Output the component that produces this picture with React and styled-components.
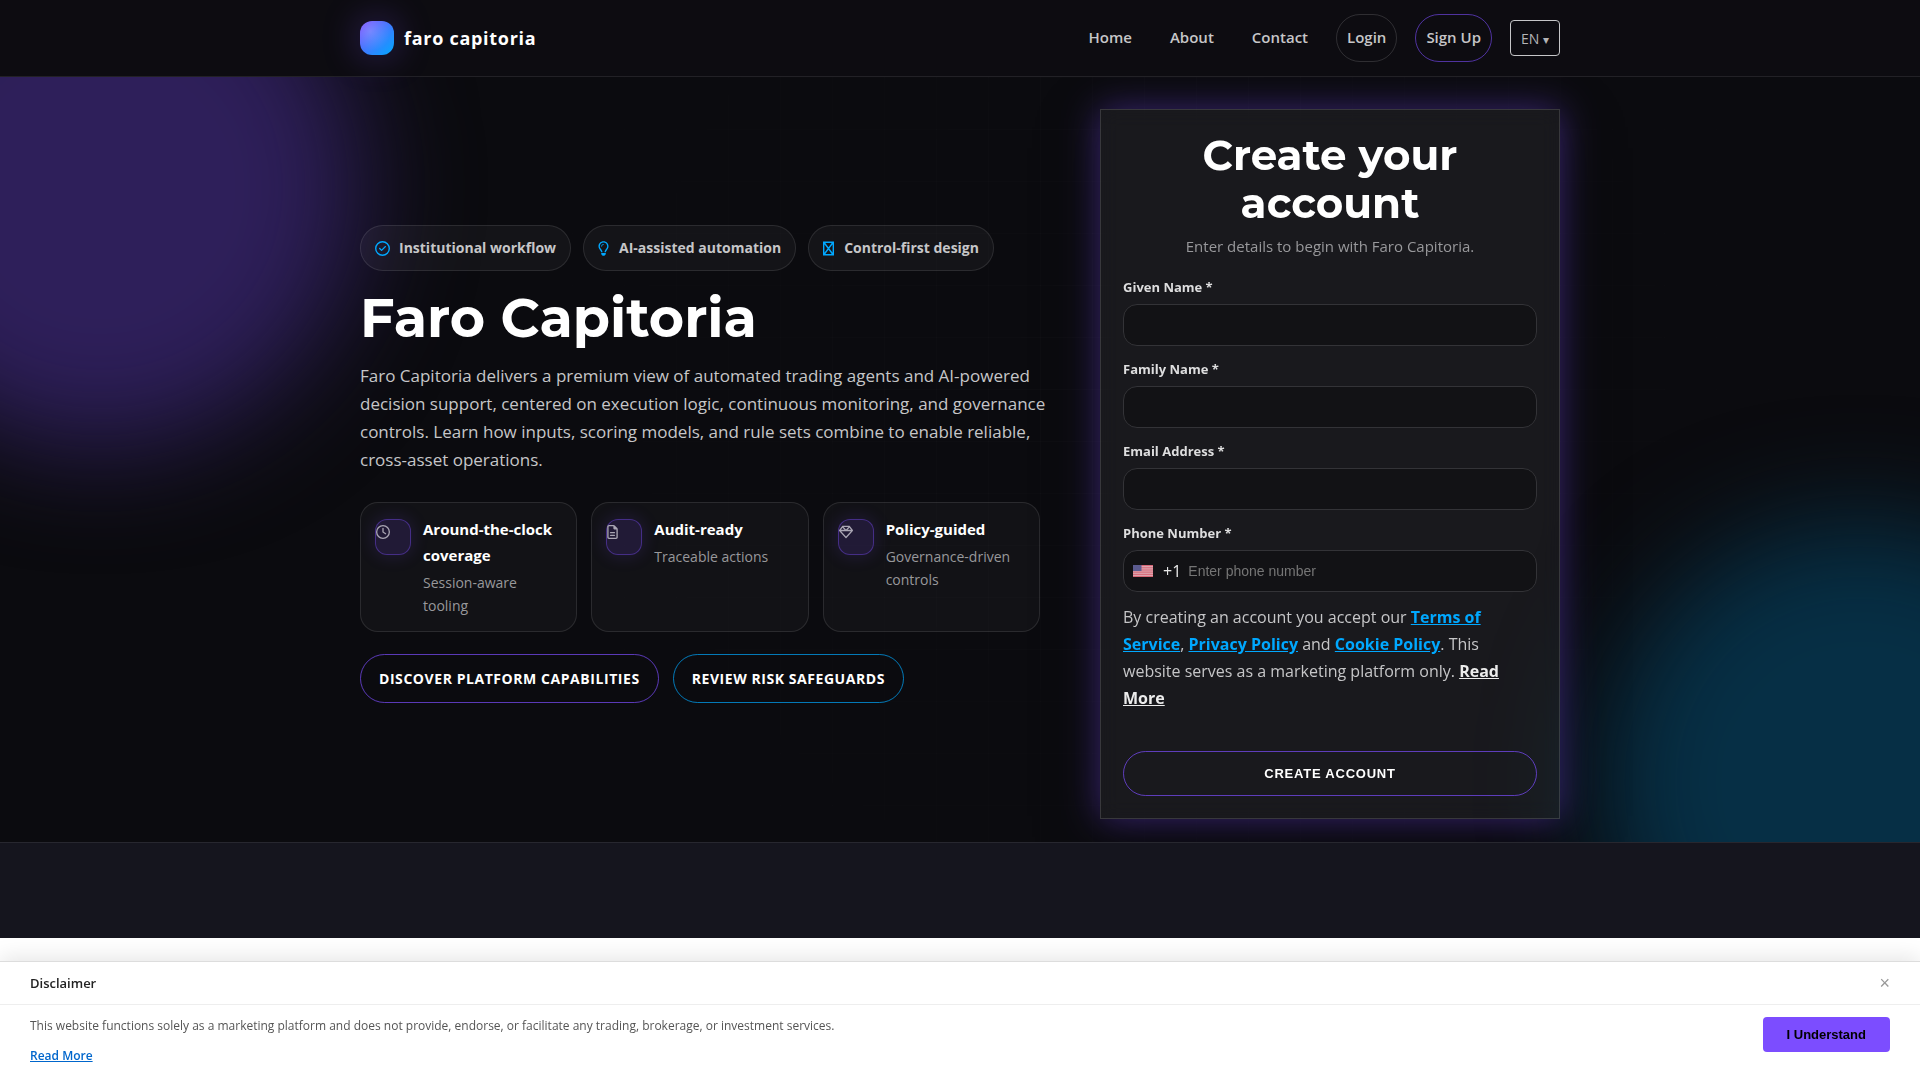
import React from "react";
import styled, { createGlobalStyle, ThemeProvider } from "styled-components";
import {
  FaRegCircleCheck,
  FaRegClock,
  FaRegFileLines,
  FaRegGem,
  FaRegLightbulb,
} from "react-icons/fa6";

const theme = {
  colors: {
    background: "#0b0b0f",
    header: "#0d0c11",
    section: "#15151e",
    primary: "#7c4dff",
    secondary: "#00a8ff",
    white: "#ffffff",
    text: "#c6c6c8",
    muted: "#98989b",
    line: "rgba(255, 255, 255, 0.1)",
  },
  fonts: {
    body: '"Open Sans", "Noto Sans", sans-serif',
    heading: 'Montserrat, "Open Sans", sans-serif',
    control: '"Liberation Sans", Arial, sans-serif',
  },
};

const GlobalStyle = createGlobalStyle`
  *,
  *::before,
  *::after {
    box-sizing: border-box;
  }

  body {
    margin: 0;
    background: #ffffff;
    font-family: ${theme.fonts.body};
    font-size: 16px;
    line-height: 27px;
    color: ${theme.colors.text};
    overflow-x: hidden;
  }

  h1,
  h2,
  h3,
  p {
    margin: 0;
  }
`;

const Container = styled.div`
  width: 100%;
  max-width: 1240px;
  margin: 0 auto;
  padding: 0 20px;
`;

/* Header */

const Header = styled.header`
  position: relative;
  z-index: 2;
  background-color: ${({ theme }) => theme.colors.header};
  border-bottom: 1px solid rgba(255, 255, 255, 0.09);
`;

const HeaderRow = styled(Container)`
  display: flex;
  justify-content: space-between;
  align-items: center;
  padding-top: 14px;
  padding-bottom: 14px;
`;

const Brand = styled.a`
  display: flex;
  align-items: center;
  gap: 10px;
  font-size: 18px;
  font-weight: 700;
  letter-spacing: 0.04em;
  color: ${({ theme }) => theme.colors.white};
  text-decoration: none;
`;

const BrandMark = styled.span`
  width: 34px;
  height: 34px;
  border-radius: 12px;
  background: radial-gradient(
      circle at 30% 30%,
      rgba(255, 255, 255, 0.2),
      transparent 60%
    ),
    linear-gradient(135deg, #7c4dff, #00a8ff);
  box-shadow: 0 0 36px rgba(124, 77, 255, 0.35);
`;

const Nav = styled.nav`
  display: flex;
  align-items: center;
  gap: 18px;
`;

const navBorders = {
  soft: "1px solid rgba(255, 255, 255, 0.14)",
  accent: "1px solid rgba(124, 77, 255, 0.6)",
};

const NavLink = styled.a`
  padding: 10px 10px 12px;
  border: ${({ $outline }) => navBorders[$outline] || 0};
  border-radius: 24px;
  font-size: 15px;
  font-weight: 600;
  line-height: 24px;
  color: ${({ theme }) => theme.colors.text};
  text-decoration: none;
`;

const LanguageButton = styled.button`
  height: 36px;
  padding: 0 10px;
  border: 1px solid ${({ theme }) => theme.colors.text};
  border-radius: 4px;
  background: transparent;
  font-family: ${({ theme }) => theme.fonts.body};
  font-size: 14px;
  color: #b4b4b6;
  cursor: pointer;

  span {
    font-size: 12px;
  }
`;

/* Hero */

const Hero = styled.section`
  position: relative;
  overflow: hidden;
  padding: 32px 0 23px;
  background-color: ${({ theme }) => theme.colors.background};

  &::before {
    content: "";
    position: absolute;
    inset: 0;
    background-image: linear-gradient(
        to right,
        rgba(255, 255, 255, 0.03) 1px,
        transparent 1px
      ),
      linear-gradient(to bottom, rgba(255, 255, 255, 0.03) 1px, transparent 1px);
    background-size: 52px 52px;
    mask-image: radial-gradient(circle at 60% 40%, #000000, transparent 60%);
    opacity: 0.5;
  }
`;

const Glow = styled.div`
  position: absolute;
  width: 520px;
  height: 520px;
  border-radius: 50%;
  filter: blur(55px);
`;

const PurpleGlow = styled(Glow)`
  top: -150px;
  left: -160px;
  background: #2e1f5a;
`;

const BlueGlow = styled(Glow)`
  right: -200px;
  bottom: -200px;
  background: #062f45;
`;

const HeroGrid = styled(Container)`
  position: relative;
  display: grid;
  grid-template-columns: minmax(0, 1fr) 460px;
  align-items: center;
  gap: 60px;

  @media screen and (max-width: 1100px) {
    grid-template-columns: minmax(0, 1fr);
  }
`;

const Chips = styled.div`
  display: flex;
  flex-wrap: wrap;
  gap: 12px;
`;

const Chip = styled.span`
  display: flex;
  align-items: center;
  gap: ${({ $narrow }) => ($narrow ? 10 : 9)}px;
  padding: 10px 14px;
  border: 1px solid ${({ theme }) => theme.colors.line};
  border-radius: 24px;
  background-color: rgba(255, 255, 255, 0.04);
  font-size: 14px;
  font-weight: 700;
  line-height: 24px;

  svg {
    width: ${({ $narrow }) => ($narrow ? 11 : 15)}px;
    height: 15px;
    color: ${({ theme }) => theme.colors.secondary};
  }
`;

const Title = styled.h1`
  margin-top: 19px;
  font-family: ${({ theme }) => theme.fonts.heading};
  font-size: 54px;
  font-weight: 700;
  line-height: 57px;
  color: ${({ theme }) => theme.colors.white};
`;

const Lead = styled.p`
  margin-top: 15px;
  margin-right: -10px;
  font-size: 17px;
  line-height: 28px;
`;

const Features = styled.div`
  display: grid;
  grid-template-columns: repeat(3, minmax(0, 1fr));
  gap: 14px;
  margin-top: 28px;
`;

const Feature = styled.article`
  display: flex;
  align-items: flex-start;
  gap: 12px;
  padding: 13px 14px 14px;
  border: 1px solid ${({ theme }) => theme.colors.line};
  border-radius: 18px;
  background-color: rgba(255, 255, 255, 0.03);
`;

const FeatureIcon = styled.span`
  flex: none;
  display: flex;
  align-items: flex-start;
  width: 36px;
  height: 36px;
  margin-top: 3px;
  padding-top: 5px;
  border: 1px solid rgba(124, 77, 255, 0.4);
  border-radius: 12px;
  background-color: rgba(124, 77, 255, 0.14);
  box-shadow: 0 0 18px rgba(124, 77, 255, 0.18);

  svg {
    width: ${({ $narrow }) => ($narrow ? 11 : 14)}px;
    height: 14px;
    color: #aaa6b4;
  }
`;

const FeatureTitle = styled.h3`
  font-size: 15px;
  font-weight: 700;
  line-height: 26px;
  color: ${({ theme }) => theme.colors.white};
`;

const FeatureText = styled.p`
  margin-top: 3px;
  font-size: 14px;
  line-height: 23px;
  color: ${({ theme }) => theme.colors.muted};
`;

const Actions = styled.div`
  display: flex;
  flex-wrap: wrap;
  gap: 14px;
  margin-top: 22px;
`;

const ActionLink = styled.a`
  padding: 12px 18px;
  border: 1px solid
    ${({ $accent }) =>
      $accent === "blue" ? "rgba(0, 168, 255, 0.7)" : "rgba(124, 77, 255, 0.7)"};
  border-radius: 25px;
  font-size: 14px;
  font-weight: 700;
  line-height: 23px;
  letter-spacing: 0.04em;
  text-transform: uppercase;
  text-decoration: none;
  color: ${({ theme }) => theme.colors.white};
`;

/* Sign-up form */

const FormCard = styled.form`
  padding: 21px 22px 22px;
  border: 1px solid rgba(255, 255, 255, 0.14);
  background-color: rgba(255, 255, 255, 0.06);
  box-shadow: 0 0 34px rgba(124, 77, 255, 0.42), 0 18px 60px rgba(0, 0, 0, 0.4);
  backdrop-filter: blur(10px);
`;

const FormTitle = styled.h2`
  padding: 0 60px;
  font-family: ${({ theme }) => theme.fonts.heading};
  font-size: 42px;
  font-weight: 700;
  line-height: 48px;
  text-align: center;
  color: ${({ theme }) => theme.colors.white};
`;

const FormHint = styled.p`
  margin: 6px 0 17px;
  font-size: 15px;
  line-height: 26px;
  text-align: center;
  color: ${({ theme }) => theme.colors.muted};
`;

const Field = styled.div`
  display: flex;
  flex-direction: column;
  gap: 6px;
  margin-bottom: 12px;
`;

const Label = styled.label`
  font-size: 13px;
  font-weight: 700;
  line-height: 22px;
  color: #dededf;
`;

const Input = styled.input`
  height: 42px;
  padding: 0 12px;
  border: 1px solid #333337;
  border-radius: 14px;
  background-color: #121215;
  font-family: ${({ theme }) => theme.fonts.control};
  font-size: 14px;
  color: ${({ theme }) => theme.colors.white};
`;

const PhoneBox = styled.div`
  display: flex;
  align-items: center;
  height: 42px;
  padding: 0 9px;
  border: 1px solid #333337;
  border-radius: 14px;
  background-color: #121215;
  color: #e8e8e8;

  svg {
    flex: none;
    margin-right: 10px;
  }
`;

const PhoneInput = styled.input`
  flex: 1;
  min-width: 0;
  padding: 0 7px;
  border: 0;
  background: transparent;
  font-family: ${({ theme }) => theme.fonts.control};
  font-size: 14px;
  color: ${({ theme }) => theme.colors.white};

  &::placeholder {
    color: #757575;
  }
`;

const Terms = styled.p`
  margin-bottom: 39px;
`;

const TermsLink = styled.a`
  font-weight: 700;
  color: ${({ theme, $plain }) => ($plain ? "#ececec" : theme.colors.secondary)};
`;

const SubmitButton = styled.button`
  display: block;
  width: 100%;
  height: 45px;
  border: 1px solid rgba(124, 77, 255, 0.7);
  border-radius: 23px;
  background: transparent;
  font-family: ${({ theme }) => theme.fonts.control};
  font-size: 13px;
  font-weight: 700;
  letter-spacing: 0.06em;
  text-transform: uppercase;
  color: ${({ theme }) => theme.colors.white};
  cursor: pointer;
`;

const NextSection = styled.section`
  position: relative;
  height: 96px;
  border-top: 1px solid rgba(255, 255, 255, 0.08);
  background-color: ${({ theme }) => theme.colors.section};
`;

/* Disclaimer bar */

const Disclaimer = styled.aside`
  position: fixed;
  right: 0;
  bottom: 0;
  left: 0;
  z-index: 10;
  border-top: 1px solid #dddddd;
  background-color: #ffffff;
  box-shadow: 0 -4px 20px rgba(0, 0, 0, 0.1);
`;

const DisclaimerHead = styled.div`
  display: flex;
  justify-content: space-between;
  align-items: center;
  height: 43px;
  padding: 0 30px;
  border-bottom: 1px solid #eeeeee;
`;

const DisclaimerTitle = styled.h2`
  font-size: 13px;
  font-weight: 600;
  line-height: 22px;
  color: #222222;
`;

const CloseButton = styled.button`
  padding: 0;
  border: 0;
  background: transparent;
  font-family: ${({ theme }) => theme.fonts.control};
  font-size: 18px;
  line-height: 18px;
  color: #999999;
  cursor: pointer;
`;

const DisclaimerBody = styled.div`
  display: flex;
  justify-content: space-between;
  align-items: flex-start;
  gap: 20px;
  padding: 12px 30px 15px;
  font-size: 12px;
  line-height: 18px;
  color: #555555;
`;

const ReadMore = styled.a`
  display: inline-block;
  margin-top: 12px;
  font-weight: 600;
  color: #0066cc;
`;

const ConfirmButton = styled.button`
  flex: none;
  height: 35px;
  padding: 0 24px;
  border: 0;
  border-radius: 4px;
  background-color: ${({ theme }) => theme.colors.primary};
  font-family: ${({ theme }) => theme.fonts.control};
  font-size: 13px;
  font-weight: 700;
  color: #000000;
  cursor: pointer;
`;

const CrossedBoxIcon = () => (
  <svg viewBox="0 0 11 15" fill="none" stroke="currentColor" aria-hidden="true">
    <path strokeWidth="1.4" d="M.7 1.2h9.6v12.6H.7zM1 1.5l9 12M10 1.5l-9 12" />
  </svg>
);

const UsFlag = () => (
  <svg width="20" height="12" viewBox="0 0 20 12" role="img" aria-label="United States">
    <rect width="20" height="12" fill="#d6606f" />
    <path
      d="M0 1.4h20M0 3.2h20M0 5h20M0 6.9h20M0 8.7h20M0 10.6h20"
      stroke="#dfb6bd"
      strokeWidth="0.9"
    />
    <rect width="8.5" height="6" fill="#5b5b8f" />
  </svg>
);

const chips = [
  { icon: <FaRegCircleCheck />, text: "Institutional workflow" },
  { icon: <FaRegLightbulb />, text: "AI-assisted automation", narrow: true },
  { icon: <CrossedBoxIcon />, text: "Control-first design", narrow: true },
];

const features = [
  {
    icon: <FaRegClock />,
    title: "Around-the-clock coverage",
    text: "Session-aware tooling",
  },
  {
    icon: <FaRegFileLines />,
    title: "Audit-ready",
    text: "Traceable actions",
    narrow: true,
  },
  {
    icon: <FaRegGem />,
    title: "Policy-guided",
    text: "Governance-driven controls",
  },
];

const fields = [
  { id: "given-name", label: "Given Name *", type: "text" },
  { id: "family-name", label: "Family Name *", type: "text" },
  { id: "email", label: "Email Address *", type: "email" },
];

const SiteHeader = () => (
  <Header>
    <HeaderRow>
      <Brand href="#">
        <BrandMark />
        faro capitoria
      </Brand>
      <Nav>
        <NavLink href="#">Home</NavLink>
        <NavLink href="#">About</NavLink>
        <NavLink href="#">Contact</NavLink>
        <NavLink href="#" $outline="soft">
          Login
        </NavLink>
        <NavLink href="#" $outline="accent">
          Sign Up
        </NavLink>
        <LanguageButton type="button">
          EN <span>▾</span>
        </LanguageButton>
      </Nav>
    </HeaderRow>
  </Header>
);

const HeroCopy = () => (
  <div>
    <Chips>
      {chips.map(({ icon, text, narrow }) => (
        <Chip key={text} $narrow={narrow}>
          {icon}
          {text}
        </Chip>
      ))}
    </Chips>
    <Title>Faro Capitoria</Title>
    <Lead>
      Faro Capitoria delivers a premium view of automated trading agents and
      AI-powered decision support, centered on execution logic, continuous
      monitoring, and governance controls. Learn how inputs, scoring models, and
      rule sets combine to enable reliable, cross-asset operations.
    </Lead>
    <Features>
      {features.map(({ icon, title, text, narrow }) => (
        <Feature key={title}>
          <FeatureIcon $narrow={narrow}>{icon}</FeatureIcon>
          <div>
            <FeatureTitle>{title}</FeatureTitle>
            <FeatureText>{text}</FeatureText>
          </div>
        </Feature>
      ))}
    </Features>
    <Actions>
      <ActionLink href="#">Discover platform capabilities</ActionLink>
      <ActionLink href="#" $accent="blue">
        Review risk safeguards
      </ActionLink>
    </Actions>
  </div>
);

const SignUpForm = () => (
  <FormCard onSubmit={(event) => event.preventDefault()}>
    <FormTitle>Create your account</FormTitle>
    <FormHint>Enter details to begin with Faro Capitoria.</FormHint>
    {fields.map(({ id, label, type }) => (
      <Field key={id}>
        <Label htmlFor={id}>{label}</Label>
        <Input id={id} type={type} />
      </Field>
    ))}
    <Field>
      <Label htmlFor="phone">Phone Number *</Label>
      <PhoneBox>
        <UsFlag />
        <span>+1</span>
        <PhoneInput id="phone" type="tel" placeholder="Enter phone number" />
      </PhoneBox>
    </Field>
    <Terms>
      By creating an account you accept our{" "}
      <TermsLink href="#">Terms of Service</TermsLink>,{" "}
      <TermsLink href="#">Privacy Policy</TermsLink> and{" "}
      <TermsLink href="#">Cookie Policy</TermsLink>. This website serves as a
      marketing platform only.{" "}
      <TermsLink href="#" $plain>
        Read More
      </TermsLink>
    </Terms>
    <SubmitButton type="submit">Create account</SubmitButton>
  </FormCard>
);

const DisclaimerBar = () => (
  <Disclaimer>
    <DisclaimerHead>
      <DisclaimerTitle>Disclaimer</DisclaimerTitle>
      <CloseButton type="button" aria-label="Close">
        ×
      </CloseButton>
    </DisclaimerHead>
    <DisclaimerBody>
      <div>
        <p>
          This website functions solely as a marketing platform and does not
          provide, endorse, or facilitate any trading, brokerage, or investment
          services.
        </p>
        <ReadMore href="#">Read More</ReadMore>
      </div>
      <ConfirmButton type="button">I Understand</ConfirmButton>
    </DisclaimerBody>
  </Disclaimer>
);

const App = () => (
  <ThemeProvider theme={theme}>
    <GlobalStyle />
    <SiteHeader />
    <main>
      <Hero>
        <PurpleGlow />
        <BlueGlow />
        <HeroGrid>
          <HeroCopy />
          <SignUpForm />
        </HeroGrid>
      </Hero>
      <NextSection />
    </main>
    <DisclaimerBar />
  </ThemeProvider>
);

export default App;
